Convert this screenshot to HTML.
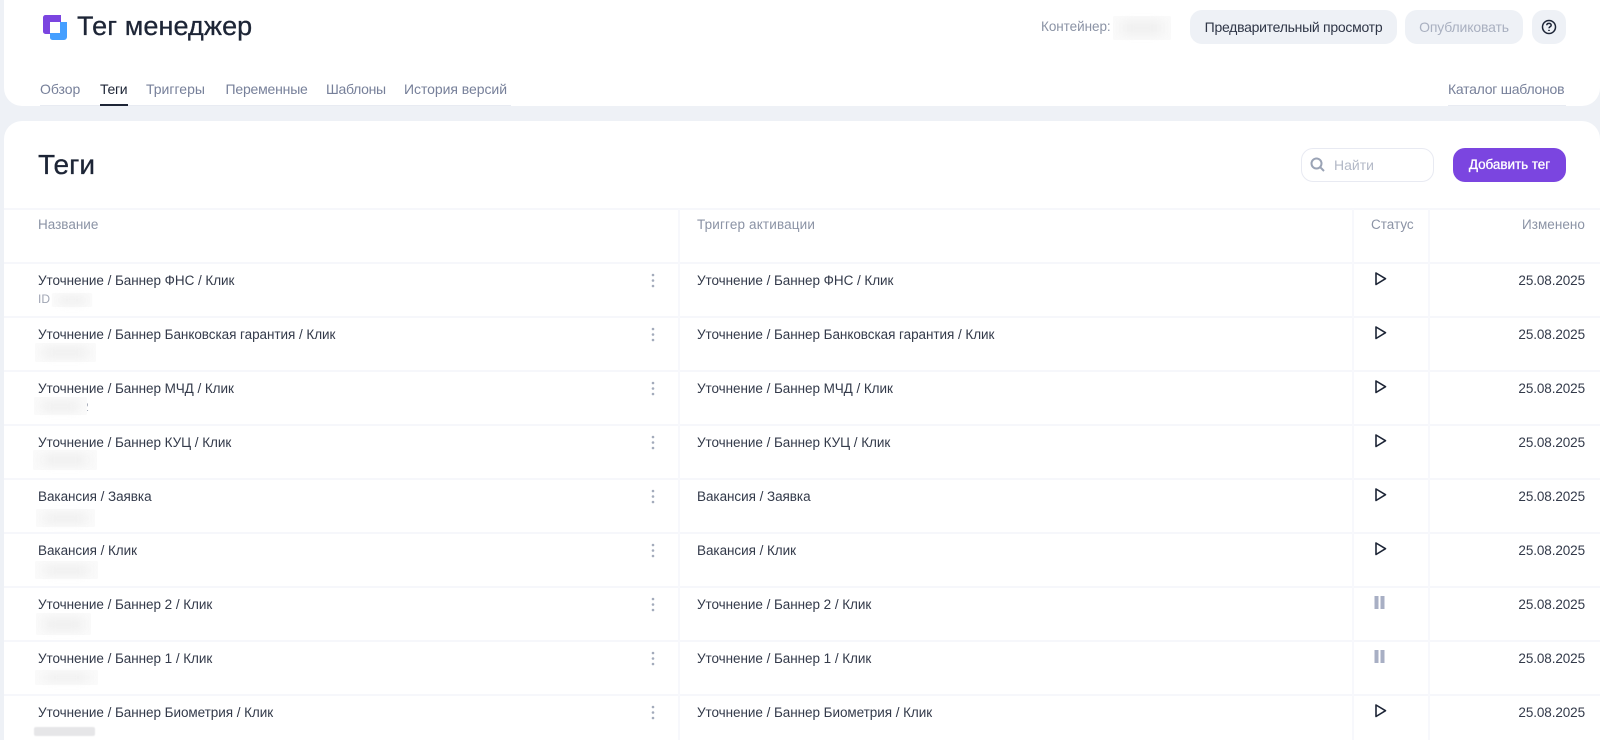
<!DOCTYPE html>
<html lang="ru"><head><meta charset="utf-8"><title>Теги</title>
<style>
*{box-sizing:border-box}
html,body{margin:0;width:1600px;height:740px;overflow:hidden;background:#eef1f6}
body{position:relative;font-family:"Liberation Sans",sans-serif;color:#2a3142;font-size:14px}
.a{position:absolute;white-space:nowrap;line-height:18px}
.card{position:absolute;background:#fff}
.tab{top:80px;color:#77809a}
.btn{position:absolute;top:10px;height:34px;border-radius:12px;background:#eef1f6;text-align:center;line-height:34px;font-size:14px;letter-spacing:-.15px}
.hl{position:absolute;left:4px;right:0;height:2px;background:#f6f7fb}
.vl{position:absolute;width:2px;top:209px;height:531px;background:#f7f8fc}
.th{top:216px;color:#8b93a5;font-size:13.5px}
.n,.t,.d{color:#333a4a;font-size:13.5px;letter-spacing:-.05px}
.d{right:15px;letter-spacing:-.1px}
.b{position:absolute;border-radius:2px;background:#f7f7f7;box-shadow:inset 0 0 10px 2px #fbfbfb}
.b i{position:absolute;left:20%;right:20%;top:25%;bottom:25%;background:#f0f0f0;filter:blur(4px);display:block}
svg{position:absolute;overflow:visible}
</style></head><body>

<div class="card" style="left:4px;top:0;width:1596px;height:106px;border-radius:0 0 18px 18px"></div>
<div class="card" style="left:4px;top:121px;width:1596px;height:619px;border-radius:18px 18px 0 0"></div>

<svg style="left:43px;top:15px" width="24" height="25" viewBox="0 0 24 25">
<path d="M2.5 0H18V7H7V19H2.500A2.500 2.500 0 0 1 0 16.500V2.500A2.500 2.500 0 0 1 2.500 0Z" fill="#7b45e0"/>
<path d="M17 7H24V22A3 3 0 0 1 21 25H9.500A2.500 2.500 0 0 1 7 22.500V18H17Z" fill="#459fff"/>
</svg>
<div class="a" style="left:77px;top:10px;font-size:27px;line-height:32px;color:#1d2536;letter-spacing:.1px;-webkit-text-stroke:.3px #1d2536">Тег менеджер</div>

<div class="a" style="left:1041px;top:18px;color:#8b93a5;font-size:13.5px;letter-spacing:-.05px">Контейнер:</div>
<div class="b" style="left:1113px;top:16px;width:58px;height:24px"><i></i></div>
<div class="btn" style="left:1190px;width:207px;color:#2f3647;letter-spacing:-.27px">Предварительный просмотр</div>
<div class="btn" style="left:1405px;width:118px;color:#a9b0c0">Опубликовать</div>
<div class="btn" style="left:1532px;width:34px"></div>
<svg style="left:1541px;top:19px" width="16" height="16" viewBox="0 0 16 16" fill="none" stroke="#1d2536" stroke-width="1.500">
<circle cx="8" cy="8" r="6.500"/><path d="M5.800 6.300C5.800 5 6.800 4.400 8 4.400C9.200 4.400 10.200 5.100 10.200 6.200C10.200 7.600 8 7.600 8 9.300"/><path d="M8 10.800V12" stroke-width="1.600"/>
</svg>

<div class="a tab" style="left:40px;letter-spacing:-.05px">Обзор</div>
<div class="a tab" style="left:100px;color:#1d2536;letter-spacing:-.3px">Теги</div>
<div class="a tab" style="left:146px;letter-spacing:0">Триггеры</div>
<div class="a tab" style="left:225.500px;letter-spacing:-.2px">Переменные</div>
<div class="a tab" style="left:326px;letter-spacing:-.3px">Шаблоны</div>
<div class="a tab" style="left:404px;letter-spacing:-.05px">История версий</div>
<div class="a tab" style="left:1448px;letter-spacing:-.25px">Каталог шаблонов</div>
<div style="position:absolute;left:40px;top:105px;width:471px;height:1px;background:#e8ebf2"></div>
<div style="position:absolute;left:1448px;top:105px;width:118px;height:1px;background:#e8ebf2"></div>
<div style="position:absolute;left:100px;top:104px;width:28px;height:2px;background:#1d2536"></div>

<div class="a" style="left:38px;top:148px;font-size:28px;line-height:34px;color:#1d2536;-webkit-text-stroke:.3px #1d2536">Теги</div>

<div style="position:absolute;left:1301px;top:148px;width:133px;height:34px;border:1px solid #e8eaf2;border-radius:12px;background:#fff"></div>
<svg style="left:1310px;top:157px" width="16" height="16" viewBox="0 0 16 16" fill="none" stroke="#9aa3b5" stroke-width="2">
<circle cx="6.500" cy="6.500" r="5"/><path d="M10.200 10.200L14 14"/>
</svg>
<div class="a" style="left:1334px;top:156px;color:#b3b9c7">Найти</div>
<div style="position:absolute;left:1453px;top:148px;width:113px;height:34px;border-radius:12px;background:#7b45e0;color:#fff;text-align:center;line-height:34px;font-size:13.5px;-webkit-text-stroke:.3px #fff;letter-spacing:-.05px">Добавить тег</div>

<div class="hl" style="top:208px"></div>
<div class="hl" style="top:262px"></div>
<div class="hl" style="top:316px"></div>
<div class="hl" style="top:370px"></div>
<div class="hl" style="top:424px"></div>
<div class="hl" style="top:478px"></div>
<div class="hl" style="top:532px"></div>
<div class="hl" style="top:586px"></div>
<div class="hl" style="top:640px"></div>
<div class="hl" style="top:694px"></div>
<div class="vl" style="left:678px"></div>
<div class="vl" style="left:1352px"></div>
<div class="vl" style="left:1428px"></div>

<div class="a th" style="left:38px">Название</div>
<div class="a th" style="left:697px;letter-spacing:.15px">Триггер активации</div>
<div class="a th" style="left:1371px">Статус</div>
<div class="a th" style="right:15px;letter-spacing:.05px">Изменено</div>

<!-- row 1 -->
<div class="a n" style="left:38px;top:272px">Уточнение / Баннер ФНС / Клик</div>
<div class="a" style="left:38px;top:290px;font-size:12px;color:#a0a6b4">ID</div>
<div class="b" style="left:52px;top:293px;width:40px;height:14px"><i></i></div>
<div class="a t" style="left:697px;top:272px">Уточнение / Баннер ФНС / Клик</div>
<div class="a d" style="top:272px">25.08.2025</div>
<!-- row 2 -->
<div class="a n" style="left:38px;top:326px">Уточнение / Баннер Банковская гарантия / Клик</div>
<div class="b" style="left:35px;top:343px;width:61px;height:19px"><i></i></div>
<div class="a t" style="left:697px;top:326px">Уточнение / Баннер Банковская гарантия / Клик</div>
<div class="a d" style="top:326px">25.08.2025</div>
<!-- row 3 -->
<div class="a n" style="left:38px;top:380px">Уточнение / Баннер МЧД / Клик</div>
<div class="a" style="left:82px;top:398px;font-size:12px;color:#a0a6b4">2</div>
<div class="b" style="left:34px;top:397px;width:53px;height:18px"><i></i></div>
<div class="a t" style="left:697px;top:380px">Уточнение / Баннер МЧД / Клик</div>
<div class="a d" style="top:380px">25.08.2025</div>
<!-- row 4 -->
<div class="a n" style="left:38px;top:434px">Уточнение / Баннер КУЦ / Клик</div>
<div class="b" style="left:33px;top:450px;width:64px;height:20px"><i></i></div>
<div class="a t" style="left:697px;top:434px">Уточнение / Баннер КУЦ / Клик</div>
<div class="a d" style="top:434px">25.08.2025</div>
<!-- row 5 -->
<div class="a n" style="left:38px;top:488px">Вакансия / Заявка</div>
<div class="b" style="left:36px;top:509px;width:59px;height:18px"><i></i></div>
<div class="a t" style="left:697px;top:488px">Вакансия / Заявка</div>
<div class="a d" style="top:488px">25.08.2025</div>
<!-- row 6 -->
<div class="a n" style="left:38px;top:542px">Вакансия / Клик</div>
<div class="b" style="left:35px;top:561px;width:63px;height:18px"><i></i></div>
<div class="a t" style="left:697px;top:542px">Вакансия / Клик</div>
<div class="a d" style="top:542px">25.08.2025</div>
<!-- row 7 -->
<div class="a n" style="left:38px;top:596px">Уточнение / Баннер 2 / Клик</div>
<div class="b" style="left:36px;top:613px;width:55px;height:22px"><i></i></div>
<div class="a t" style="left:697px;top:596px">Уточнение / Баннер 2 / Клик</div>
<div class="a d" style="top:596px">25.08.2025</div>
<!-- row 8 -->
<div class="a n" style="left:38px;top:650px">Уточнение / Баннер 1 / Клик</div>
<div class="b" style="left:35px;top:670px;width:63px;height:15px"><i></i></div>
<div class="a t" style="left:697px;top:650px">Уточнение / Баннер 1 / Клик</div>
<div class="a d" style="top:650px">25.08.2025</div>
<!-- row 9 -->
<div class="a n" style="left:38px;top:704px">Уточнение / Баннер Биометрия / Клик</div>
<div class="b" style="left:34px;top:727px;width:61px;height:9px;background:#e6e6e8;box-shadow:none;filter:blur(.6px)"></div>
<div class="a t" style="left:697px;top:704px">Уточнение / Баннер Биометрия / Клик</div>
<div class="a d" style="top:704px">25.08.2025</div>

<svg style="left:0;top:0" width="1600" height="740">
<defs>
<g id="dots" fill="#a3abbb"><circle cx="653" cy="0" r="1.300"/><circle cx="653" cy="5.500" r="1.300"/><circle cx="653" cy="11" r="1.300"/></g>
<path id="play" d="M1376 1V12.500L1385.500 6.700Z" fill="none" stroke="#1d2536" stroke-width="1.600" stroke-linejoin="round"/>
<g id="pause" fill="#a8afc4"><rect x="1374.500" y="0" width="4" height="13"/><rect x="1380.500" y="0" width="4" height="13"/></g>
</defs>
<use href="#dots" y="275"/><use href="#dots" y="329"/><use href="#dots" y="383"/><use href="#dots" y="437"/><use href="#dots" y="491"/><use href="#dots" y="545"/><use href="#dots" y="599"/><use href="#dots" y="653"/><use href="#dots" y="707"/>
<use href="#play" y="272"/><use href="#play" y="326"/><use href="#play" y="380"/><use href="#play" y="434"/><use href="#play" y="488"/><use href="#play" y="542"/>
<use href="#pause" y="596"/><use href="#pause" y="650"/>
<use href="#play" y="704"/>
</svg>
</body></html>
